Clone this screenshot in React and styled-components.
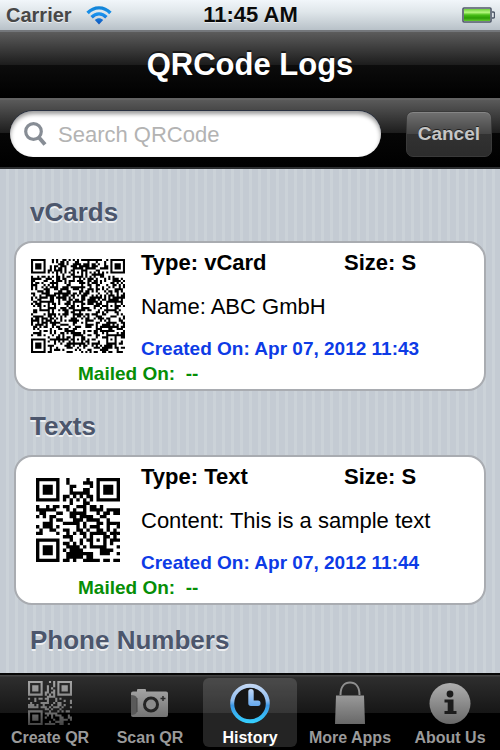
import { useState } from 'react';
import styled, { createGlobalStyle } from 'styled-components';

// alignment centres, ec words per block, data words per block, blocks (level M)
const VERSIONS = {
  1: { centres: [], ecCount: 10, dataCount: 16, blocks: 1 },
  2: { centres: [6, 18], ecCount: 16, dataCount: 28, blocks: 1 },
  7: { centres: [6, 22, 38], ecCount: 18, dataCount: 31, blocks: 4 },
};
const MASK = 7;
const VERSION_7_INFO = 0x7c94;

function multiply(a, b) {
  let out = 0;
  for (let i = 7; i >= 0; i--) {
    out = (out << 1) ^ ((out >> 7) * 0x11d);
    out ^= ((b >> i) & 1) * a;
  }
  return out;
}

function errorWords(data, count) {
  const divisor = Array(count).fill(0);
  divisor[count - 1] = 1;
  let root = 1;
  for (let i = 0; i < count; i++) {
    for (let j = 0; j < count; j++) {
      divisor[j] = multiply(divisor[j], root);
      if (j + 1 < count) divisor[j] ^= divisor[j + 1];
    }
    root = multiply(root, 2);
  }
  const rest = Array(count).fill(0);
  data.forEach((word) => {
    const factor = word ^ rest.shift();
    rest.push(0);
    divisor.forEach((d, i) => {
      rest[i] ^= multiply(d, factor);
    });
  });
  return rest;
}

function encodeText(text, { ecCount, dataCount, blocks }) {
  const total = dataCount * blocks;
  const bits = [];
  const push = (value, length) => {
    for (let i = length - 1; i >= 0; i--) bits.push((value >> i) & 1);
  };
  push(4, 4);
  push(text.length, 8);
  [...text].forEach((c) => push(c.charCodeAt(0), 8));
  push(0, Math.min(4, total * 8 - bits.length));
  while (bits.length % 8) bits.push(0);
  for (let pad = 0xec; bits.length < total * 8; pad ^= 0xec ^ 0x11) push(pad, 8);

  const words = [];
  for (let i = 0; i < total; i++) {
    words.push(parseInt(bits.slice(i * 8, i * 8 + 8).join(''), 2));
  }
  const data = Array.from({ length: blocks }, (_, b) =>
    words.slice(b * dataCount, (b + 1) * dataCount)
  );
  const errors = data.map((block) => errorWords(block, ecCount));
  const stream = [];
  for (let i = 0; i < dataCount; i++) data.forEach((b) => stream.push(b[i]));
  for (let i = 0; i < ecCount; i++) errors.forEach((b) => stream.push(b[i]));
  return stream;
}

function makeQr(text, version) {
  const spec = VERSIONS[version];
  const { centres } = spec;
  const size = version * 4 + 17;
  const stream = encodeText(text, spec);

  const grid = Array.from({ length: size }, () => Array(size).fill(null));
  const set = (x, y, v) => {
    if (x >= 0 && y >= 0 && x < size && y < size) grid[y][x] = v ? 1 : 0;
  };

  // timing lines and the three corner squares
  for (let i = 0; i < size; i++) {
    set(i, 6, i % 2 === 0);
    set(6, i, i % 2 === 0);
  }
  const corners = [
    [3, 3],
    [size - 4, 3],
    [3, size - 4],
  ];
  corners.forEach(([cx, cy]) => {
    for (let dy = -4; dy <= 4; dy++) {
      for (let dx = -4; dx <= 4; dx++) {
        const d = Math.max(Math.abs(dx), Math.abs(dy));
        set(cx + dx, cy + dy, d !== 2 && d !== 4);
      }
    }
  });

  const last = centres[centres.length - 1];
  centres.forEach((cx) =>
    centres.forEach((cy) => {
      if ((cx === 6 && (cy === 6 || cy === last)) || (cx === last && cy === 6)) return;
      for (let dy = -2; dy <= 2; dy++) {
        for (let dx = -2; dx <= 2; dx++) {
          set(cx + dx, cy + dy, Math.max(Math.abs(dx), Math.abs(dy)) !== 1);
        }
      }
    })
  );

  // format info
  let rem = MASK;
  for (let i = 0; i < 10; i++) rem = (rem << 1) ^ ((rem >> 9) * 0x537);
  const info = ((MASK << 10) | rem) ^ 0x5412;
  const bit = (i) => (info >> i) & 1;
  for (let i = 0; i <= 5; i++) set(8, i, bit(i));
  set(8, 7, bit(6));
  set(8, 8, bit(7));
  set(7, 8, bit(8));
  for (let i = 9; i < 15; i++) set(14 - i, 8, bit(i));
  for (let i = 0; i < 8; i++) set(size - 1 - i, 8, bit(i));
  for (let i = 8; i < 15; i++) set(8, size - 15 + i, bit(i));
  set(8, size - 8, 1);
  if (version === 7) {
    for (let i = 0; i < 18; i++) {
      const a = size - 11 + (i % 3);
      const b = Math.floor(i / 3);
      set(a, b, (VERSION_7_INFO >> i) & 1);
      set(b, a, (VERSION_7_INFO >> i) & 1);
    }
  }

  // data, in two-module columns from the right
  let at = 0;
  for (let right = size - 1; right >= 1; right -= 2) {
    if (right === 6) right = 5;
    for (let v = 0; v < size; v++) {
      for (let j = 0; j < 2; j++) {
        const x = right - j;
        const y = ((right + 1) & 2) === 0 ? size - 1 - v : v;
        if (grid[y][x] === null) {
          const value = at < stream.length * 8 ? (stream[at >> 3] >> (7 - (at & 7))) & 1 : 0;
          const flip = (((x + y) % 2) + ((x * y) % 3)) % 2 === 0 ? 1 : 0;
          grid[y][x] = value ^ flip;
          at++;
        }
      }
    }
  }
  return grid;
}

function QrCode({ text, version, width, fill = '#000', label, children }) {
  const grid = makeQr(text, version);
  const d = grid
    .flatMap((row, y) => row.map((v, x) => (v ? `M${x} ${y}h1v1h-1z` : '')))
    .join('');
  return (
    <svg
      width={width}
      height={width}
      viewBox={`0 0 ${grid.length} ${grid.length}`}
      role="img"
      aria-label={label}
    >
      {children}
      <path d={d} fill={fill} />
    </svg>
  );
}

const VCARD = [
  'BEGIN:VCARD',
  'VERSION:3.0',
  'N:GmbH;ABC',
  'FN:ABC GmbH',
  'ORG:ABC GmbH',
  'TEL:+49123456789',
  'EMAIL:info@abc.de',
  'URL:www.abc.de',
  'END:VCARD',
].join('\n');

const sections = [
  {
    title: 'vCards',
    logs: [
      {
        type: 'vCard',
        size: 'S',
        content: 'Name: ABC GmbH',
        created: 'Apr 07, 2012 11:43',
        mailed: '--',
        qr: { text: VCARD, version: 7, width: 94 },
      },
    ],
  },
  {
    title: 'Texts',
    logs: [
      {
        type: 'Text',
        size: 'S',
        content: 'Content: This is a sample text',
        created: 'Apr 07, 2012 11:44',
        mailed: '--',
        qr: { text: 'This is a sample text', version: 2, width: 84 },
      },
    ],
  },
  { title: 'Phone Numbers', logs: [] },
];

function WifiIcon() {
  return (
    <svg width="26" height="20" viewBox="0 0 26 20" aria-hidden="true">
      <defs>
        <linearGradient id="wifi" x1="0" y1="0" x2="0" y2="20" gradientUnits="userSpaceOnUse">
          <stop offset="0" stopColor="#0e7fd0" />
          <stop offset="0.45" stopColor="#1a93ee" />
          <stop offset="1" stopColor="#0d4fb8" />
        </linearGradient>
      </defs>
      <g fill="none" stroke="url(#wifi)" strokeWidth="3.4">
        <path d="M1.6 8C8 1.100 18 1.100 24.400 8" />
        <path d="M5.600 12.200C10 7.800 16 7.800 20.400 12.200" />
      </g>
      <path d="M8.800 15C11.400 12.800 14.600 12.800 17.200 15L13 19.400Z" fill="url(#wifi)" />
    </svg>
  );
}

function BatteryIcon() {
  return (
    <svg width="33" height="17" viewBox="0 0 33 17" aria-hidden="true">
      <defs>
        <linearGradient id="battery" x1="0" y1="0" x2="0" y2="1">
          <stop offset="0" stopColor="#6fd13c" />
          <stop offset="0.28" stopColor="#b4f77e" />
          <stop offset="0.5" stopColor="#48bd17" />
          <stop offset="0.75" stopColor="#2b9d05" />
          <stop offset="1" stopColor="#62c82e" />
        </linearGradient>
      </defs>
      <rect x="1" y="1" width="28" height="14" rx="1" fill="#e6efe6" stroke="#4f5868" strokeWidth="1.6" />
      <rect x="2" y="2" width="26" height="12" fill="url(#battery)" />
      <path
        d="M30 5h1.2q1.3 0 1.3 1.3v3.4q0 1.3-1.3 1.3H30"
        fill="#dfe5ea"
        stroke="#4f5868"
        strokeWidth="1.4"
      />
    </svg>
  );
}

function GreyGradient({ id }) {
  return (
    <linearGradient id={id} x1="0" y1="0" x2="0" y2="44" gradientUnits="userSpaceOnUse">
      <stop offset="0" stopColor="#b2b2b2" />
      <stop offset="1" stopColor="#666" />
    </linearGradient>
  );
}

function CreateIcon() {
  return (
    <QrCode text="Create QR" version={1} width={44} fill="url(#create)">
      <linearGradient id="create" x1="0" y1="0" x2="0" y2="21" gradientUnits="userSpaceOnUse">
        <stop offset="0" stopColor="#a4a4a4" />
        <stop offset="0.6" stopColor="#7c7c7c" />
        <stop offset="1" stopColor="#444" />
      </linearGradient>
    </QrCode>
  );
}

function CameraIcon() {
  return (
    <svg width="40" height="44" viewBox="0 0 40 44" aria-hidden="true">
      <defs>
        <GreyGradient id="camera" />
      </defs>
      <path
        d="M3 10.500h4V9q0-1 1-1h7q1 0 1 1v1.500h20q2 0 2 2V34q0 2-2 2H3q-2 0-2-2V12.500q0-2 2-2z"
        fill="url(#camera)"
      />
      <path d="M1 14q5 0 6 3v14q-1 3-6 3z" fill="#5a5a5a" />
      <path d="M7 17v14" stroke="#444" />
      <circle cx="21" cy="23.5" r="6.5" fill="#8b8b8b" stroke="#242424" strokeWidth="3" />
      <path d="M33 15v5M30.500 17.500h5" stroke="#2b2b2b" strokeWidth="1.5" />
    </svg>
  );
}

function HistoryIcon() {
  return (
    <svg width="40" height="44" viewBox="0 0 40 44" aria-hidden="true">
      <defs>
        <linearGradient id="clock" x1="0" y1="2" x2="0" y2="42" gradientUnits="userSpaceOnUse">
          <stop offset="0" stopColor="#c8daf4" />
          <stop offset="0.44" stopColor="#8fbdf0" />
          <stop offset="0.56" stopColor="#3c98e6" />
          <stop offset="1" stopColor="#35d0ff" />
        </linearGradient>
        <linearGradient id="hand" x1="0" y1="0" x2="0" y2="1">
          <stop offset="0" stopColor="#c0d8f8" />
          <stop offset="1" stopColor="#65a8ee" />
        </linearGradient>
      </defs>
      <circle cx="20" cy="22.5" r="17.8" fill="#161616" stroke="url(#clock)" strokeWidth="4" />
      <path
        d="M21 8q2.700 0 2.700 2.500V19.500H28q2.500 0 2.500 2.700T28 25h-7q-2.700 0-2.700-2.700V10.500Q18.300 8 21 8z"
        fill="url(#hand)"
      />
    </svg>
  );
}

function BagIcon() {
  return (
    <svg width="32" height="44" viewBox="0 0 32 44" aria-hidden="true">
      <defs>
        <GreyGradient id="bag" />
      </defs>
      <path d="M6.500 14C6.500 5 11 1.500 16 1.500S25.500 5 25.500 14" fill="none" stroke="#8e8e8e" strokeWidth="2" />
      <path d="M2 14.500h28l1 28.500H1z" fill="url(#bag)" />
    </svg>
  );
}

function InfoIcon() {
  return (
    <svg width="42" height="44" viewBox="0 0 42 44" aria-hidden="true">
      <defs>
        <GreyGradient id="info" />
      </defs>
      <circle cx="21" cy="22.5" r="20.5" fill="url(#info)" />
      <circle cx="21" cy="13" r="3.4" fill="#1c1c1c" />
      <path d="M15.500 18.500h9v11.500h3v3H15.500v-3h3.200v-8.500h-3.200z" fill="#1c1c1c" />
    </svg>
  );
}

const tabs = [
  { name: 'Create QR', Icon: CreateIcon },
  { name: 'Scan QR', Icon: CameraIcon },
  { name: 'History', Icon: HistoryIcon },
  { name: 'More Apps', Icon: BagIcon },
  { name: 'About Us', Icon: InfoIcon },
];

function LogCard({ log }) {
  return (
    <Card>
      <Thumb>
        <QrCode {...log.qr} label={`${log.type} QR code`} />
      </Thumb>
      <Details>
        <TopLine>
          <span>Type: {log.type}</span>
          <span>Size: {log.size}</span>
        </TopLine>
        <Content>{log.content}</Content>
        <Created>Created On: {log.created}</Created>
      </Details>
      <Mailed>Mailed On:&nbsp; {log.mailed}</Mailed>
    </Card>
  );
}

function App() {
  const [search, setSearch] = useState('');
  const [activeTab, setActiveTab] = useState('History');

  return (
    <Screen>
      <GlobalStyle />
      <StatusBar>
        <Carrier>
          Carrier
          <WifiIcon />
        </Carrier>
        <Clock>11:45 AM</Clock>
        <Battery>
          <BatteryIcon />
        </Battery>
      </StatusBar>
      <TitleBar>
        <Title>QRCode Logs</Title>
      </TitleBar>
      <SearchBar>
        <SearchField>
          <svg width="24" height="24" viewBox="0 0 24 24" aria-hidden="true">
            <circle cx="9.5" cy="9.5" r="7.8" fill="none" stroke="#878d95" strokeWidth="3.2" />
            <path d="M14.500 15L21 22.500" stroke="#878d95" strokeWidth="4" />
          </svg>
          <SearchInput
            type="text"
            aria-label="Search QRCode"
            placeholder="Search QRCode"
            value={search}
            onChange={(e) => setSearch(e.target.value)}
          />
        </SearchField>
        <CancelButton type="button" onClick={() => setSearch('')}>
          Cancel
        </CancelButton>
      </SearchBar>
      <Logs>
        {sections.map((section) => (
          <section key={section.title}>
            <SectionTitle>{section.title}</SectionTitle>
            {section.logs.map((log) => (
              <LogCard key={log.created} log={log} />
            ))}
          </section>
        ))}
      </Logs>
      <TabBar>
        {tabs.map(({ name, Icon }) => (
          <Tab
            key={name}
            type="button"
            $active={name === activeTab}
            onClick={() => setActiveTab(name)}
          >
            <Icon />
            {name}
          </Tab>
        ))}
      </TabBar>
    </Screen>
  );
}

export default App;

const GlobalStyle = createGlobalStyle`
  * {
    box-sizing: border-box;
  }
  body {
    margin: 0;
    background: #000;
    font-family: 'Liberation Sans', Arial, sans-serif;
  }
  svg {
    display: block;
    flex-shrink: 0;
  }
`;

const Screen = styled.div`
  display: flex;
  flex-direction: column;
  height: 100vh;
`;

const StatusBar = styled.div`
  display: grid;
  grid-template-columns: 1fr auto 1fr;
  align-items: center;
  height: 30px;
  flex-shrink: 0;
  padding: 0 5px 0 6px;
  background: linear-gradient(#f1f6fa, #dfe6ea 40%, #b8c1c8);
  font-weight: bold;
  text-shadow: 0 1px 0 rgba(255, 255, 255, 0.6);
`;
const Carrier = styled.div`
  display: flex;
  align-items: center;
  gap: 14px;
  font-size: 20px;
  color: #474747;
`;
const Clock = styled.div`
  font-size: 22px;
  color: #0a0a0a;
`;
const Battery = styled.div`
  justify-self: end;
`;

const TitleBar = styled.header`
  display: flex;
  align-items: center;
  justify-content: center;
  height: 68px;
  flex-shrink: 0;
  border-top: 2px solid #74777b;
  background: linear-gradient(#5c5c5c, #1c1c1c 50%, #0c0c0c 50%, #000);
`;
const Title = styled.h1`
  margin: 0;
  font-size: 31px;
  line-height: 36px;
  color: #fff;
  text-shadow: 0 -2px 0 rgba(0, 0, 0, 0.5);
`;

const SearchBar = styled.div`
  display: flex;
  align-items: center;
  gap: 25px;
  height: 71px;
  flex-shrink: 0;
  padding: 0 8px 0 10px;
  border-top: 2px solid #626262;
  border-bottom: 2px solid #2c2e30;
  background: linear-gradient(#5a5a5a, #1c1c1c 50%, #060606 50%, #000);
`;
const SearchField = styled.label`
  display: flex;
  align-items: center;
  gap: 10px;
  flex: 1;
  min-width: 0;
  height: 46px;
  padding: 0 14px;
  border-radius: 23px;
  background: #fff;
  box-shadow: inset 0 3px 4px rgba(0, 0, 0, 0.4), 0 -1px 0 #2a3242;
`;
const SearchInput = styled.input`
  flex: 1;
  min-width: 0;
  padding: 2px 0 0;
  border: 0;
  outline: none;
  background: transparent;
  font-family: inherit;
  font-size: 22px;
  color: #222;

  &::placeholder {
    color: #b3b3b3;
    opacity: 1;
  }
`;
const CancelButton = styled.button`
  height: 46px;
  padding: 0 11px;
  border: 1px solid #3a3a3a;
  border-radius: 7px;
  background: linear-gradient(#717171, #454545 50%, #323232 50%, #2c2c2c);
  box-shadow: inset 0 1px 0 rgba(255, 255, 255, 0.15);
  font-family: inherit;
  font-size: 19px;
  font-weight: bold;
  color: #c6c6c6;
  text-shadow: 0 -1px 0 rgba(0, 0, 0, 0.6);
  cursor: pointer;
`;

const Logs = styled.main`
  flex: 1;
  min-height: 0;
  overflow-y: scroll;
  padding: 8px 14px 0;
  background: repeating-linear-gradient(90deg, #c4cbd3 0 6px, #cbd2d8 6px 9px);
  ::-webkit-scrollbar {
    display: none;
  }
  scrollbar-width: none;
`;
const SectionTitle = styled.h2`
  margin: 0;
  padding: 20px 16px 14px;
  font-size: 26px;
  line-height: 30px;
  color: #4c566c;
  text-shadow: 0 2px 0 rgba(255, 255, 255, 0.7);
`;

const Card = styled.article`
  display: grid;
  grid-template-columns: 94px 1fr;
  column-gap: 16px;
  padding: 7px 14px 3px 15px;
  border: 2px solid #a9acb1;
  border-radius: 18px;
  background: #fff;
  font-weight: bold;
`;
const Thumb = styled.div`
  display: flex;
  align-items: center;
  justify-content: center;
`;
const Details = styled.div`
  display: flex;
  flex-direction: column;
  min-width: 0;
`;
const TopLine = styled.div`
  display: grid;
  grid-template-columns: 203px 1fr;
  font-size: 22px;
  line-height: 26px;
`;
const Content = styled.p`
  margin: 18px 0 17px;
  font-size: 22px;
  font-weight: normal;
  line-height: 26px;
`;
const Created = styled.p`
  margin: 0;
  font-size: 19px;
  line-height: 24px;
  color: #0d3be6;
`;
const Mailed = styled.p`
  grid-column: 1 / -1;
  margin: 0;
  padding-left: 47px;
  font-size: 19px;
  line-height: 25px;
  color: #068e06;
`;

const TabBar = styled.nav`
  display: grid;
  grid-template-columns: repeat(5, 1fr);
  flex-shrink: 0;
  padding-bottom: 3px;
  border-top: 2px solid #060606;
  background: linear-gradient(#434343 0 1px, #2e2e2e 2px, #161616 38px, #000 38px);
`;
const Tab = styled.button`
  display: flex;
  flex-direction: column;
  align-items: center;
  gap: 4px;
  margin: 3px 3px 0;
  padding: 3px 0 0;
  border: 0;
  border-radius: 6px;
  background: ${(props) => (props.$active ? 'rgba(255, 255, 255, 0.14)' : 'transparent')};
  font-family: inherit;
  font-size: 16px;
  font-weight: bold;
  line-height: 18px;
  white-space: nowrap;
  color: ${(props) => (props.$active ? '#fff' : '#9a9a9a')};
  cursor: pointer;
`;
